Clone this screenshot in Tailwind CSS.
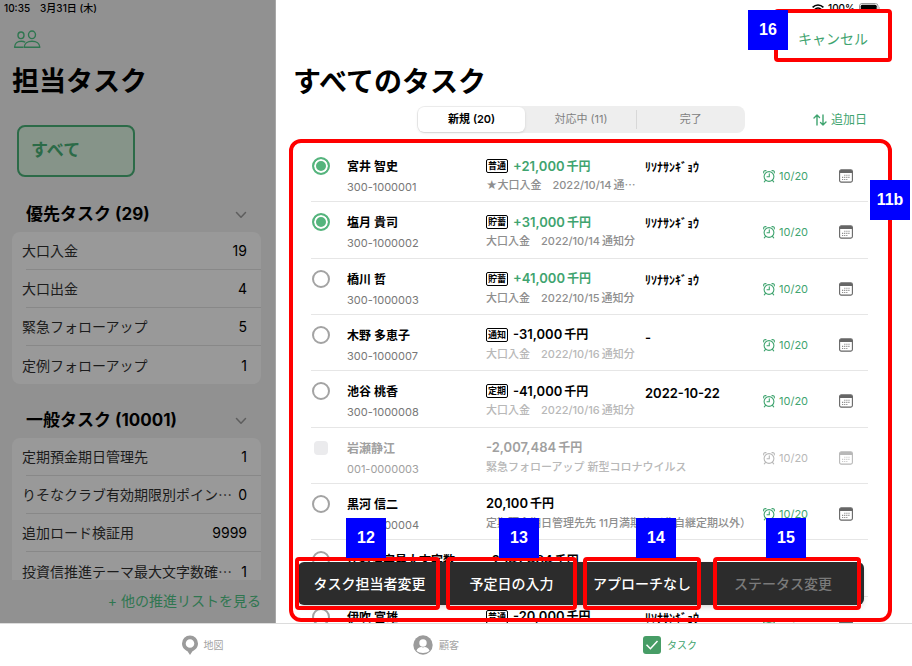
<!DOCTYPE html>
<html lang="ja">
<head>
<meta charset="utf-8">
<meta name="viewport" content="width=device-width, initial-scale=1">
<title>担当タスク</title>
<script src="https://cdn.jsdelivr.net/npm/@tailwindcss/browser@4"></script>
</head>
<body class="flex h-screen flex-col overflow-hidden bg-white font-['Inter','Noto_Sans_CJK_JP',sans-serif] text-black">

<svg class="hidden" aria-hidden="true">
  <symbol id="alarm" viewBox="0 0 14 14" fill="none" stroke="currentColor" stroke-width="1.100" stroke-linecap="round" stroke-linejoin="round">
    <circle cx="7" cy="7.500" r="4.900"/>
    <path d="M7.300 4.800v2.900H5M3.500 11.300l-1.200 1.500M10.500 11.300l1.200 1.500M1.700 3.900Q1.100 1.400 4 1.600M12.300 3.900Q12.900 1.400 10 1.600"/>
  </symbol>
  <symbol id="calendar" viewBox="0 0 14 14">
    <rect x=".6" y=".9" width="12.800" height="12.200" rx="1.600" fill="none" stroke="currentColor" stroke-width="1.100"/>
    <path d="M.6 4V2.400Q.6.9 2.200.9h9.600q1.600 0 1.600 1.500V4z" fill="currentColor"/>
    <path d="M5.200 6.300h6M3 8.400h8.200M3 10.500h6.200" stroke="currentColor" stroke-opacity=".75" stroke-width="1.100" stroke-dasharray="1.200 .9" fill="none"/>
  </symbol>
  <symbol id="chevron" viewBox="0 0 12 8" fill="none" stroke="currentColor" stroke-width="1.500" stroke-linecap="round" stroke-linejoin="round">
    <path d="M1.500 1.500 6 6.300l4.500-4.800"/>
  </symbol>
</svg>

<div class="flex min-h-0 flex-1">
  <aside class="flex w-[276px] shrink-0 flex-col border-r border-[#a8a8a8] bg-[#919191]">
    <div class="flex h-4 items-center gap-[10px] pl-1 text-[10px] font-medium"><span>10:35</span><span>3月31日 (木)</span></div>
    <svg class="mt-3 ml-[13px] h-5 w-7 text-[#2f7650]" viewBox="0 0 28 20" fill="none" stroke="currentColor" stroke-width="1.400" role="img" aria-label="顧客グループ">
      <ellipse cx="8" cy="7.300" rx="3" ry="3.300"/><ellipse cx="19" cy="6.800" rx="3.500" ry="3.800"/>
      <path d="M10.300 19.200H1.600c0-4 3-6 6.600-6 1.600 0 3 .4 4 1.100M11.200 19.200c0-3.900 3.500-6 7.800-6s7.800 2.100 7.800 6z" stroke-linejoin="round"/>
    </svg>
    <h1 class="mt-[14px] ml-3 text-[27px] leading-10 font-bold">担当タスク</h1>
    <button class="mt-[23px] ml-[17px] h-[52px] w-[118px] rounded-lg border-2 border-[#2c6b48] bg-[#869489] pl-3 text-left text-[17px] font-bold text-[#2c6b48]">すべて</button>

    <div class="mt-5 flex flex-col px-3">
      <div class="flex h-[35px] items-center justify-between pr-4 pl-[14px]">
        <h2 class="text-[17px] font-bold">優先タスク (29)</h2>
        <button class="text-[#5e5e5e]" aria-label="優先タスクを折りたたむ"><svg class="h-2 w-3"><use href="#chevron"/></svg></button>
      </div>
      <ul id="priority" class="mr-[2px] rounded-lg bg-[#999999]"></ul>
    </div>
    <div class="mt-[19px] flex min-h-0 flex-1 flex-col overflow-hidden px-3">
      <div class="flex h-[35px] shrink-0 items-center justify-between pr-4 pl-[14px]">
        <h2 class="text-[17px] font-bold">一般タスク (10001)</h2>
        <button class="text-[#5e5e5e]" aria-label="一般タスクを折りたたむ"><svg class="h-2 w-3"><use href="#chevron"/></svg></button>
      </div>
      <ul id="general" class="mr-[2px] rounded-t-lg bg-[#999999]"></ul>
    </div>
    <a href="#" class="flex h-[43px] shrink-0 items-center justify-end pr-[14px] pb-[2px] text-[14px] text-[#2f7650]">+ 他の推進リストを見る</a>
  </aside>

  <main class="flex min-w-0 flex-1 flex-col">
    <div class="relative flex h-[62px] shrink-0 flex-col items-end">
      <div class="flex h-4 items-center gap-1 pr-[31px] text-[10px] font-medium">
        <svg class="h-[9px] w-3" viewBox="0 0 12 9" fill="none" stroke="currentColor" stroke-width="1.500" aria-hidden="true"><path d="M.6 3.400C3.700.3 8.300.3 11.400 3.400M2.700 5.500c1.900-1.900 4.700-1.900 6.600 0"/><path d="M4.300 6.900 6 8.700l1.700-1.800q-1.700-1.300-3.400 0z" fill="currentColor" stroke="none"/></svg>
        <span>100%</span>
        <svg class="h-[10px] w-[22px]" viewBox="0 0 22 10" aria-hidden="true"><rect x=".5" y=".5" width="18.500" height="9" rx="2.500" fill="none" stroke="#999"/><rect x="1.700" y="1.700" width="16" height="6.600" rx="1.500"/><path d="M20.300 3.300q1.400 1.700 0 3.400z" fill="#999"/></svg>
      </div>
      <button class="mt-3 mr-[44px] text-[14px] leading-[22px] text-[#3fa46f]">キャンセル</button>
      <div class="pointer-events-none absolute top-[9px] right-[20px] h-[53px] w-[118px] rounded-sm border-4 border-[#ff0000]"></div>
      <span class="absolute top-[10px] right-[124px] flex size-10 items-center justify-center bg-[#0000ff] font-['Liberation_Sans',sans-serif] text-[16px] font-bold text-white">16</span>
    </div>
    <h1 class="ml-[17px] text-[28px] leading-10 font-bold">すべてのタスク</h1>
    <div class="mt-1 flex h-[27px] shrink-0 items-center pr-[45px] pl-[141px]">
      <div class="grid h-full w-[328px] grid-cols-3 rounded-lg bg-[#eeeeee] text-[11px] text-[#808080]">
        <button class="m-px rounded-md bg-white font-semibold text-black shadow">新規 (20)</button>
        <button>対応中 (11)</button>
        <button class="my-1 border-l border-[#d8d8d8]">完了</button>
      </div>
      <button class="ml-auto flex items-center gap-1 text-[12px] text-[#3fa46f]">
        <svg class="h-3 w-[14px]" viewBox="0 0 14 12" fill="none" stroke="currentColor" stroke-width="1.400" stroke-linecap="round" stroke-linejoin="round" aria-hidden="true"><path d="M4 11V1M1 4l3-3 2.500 2.500M10 1v10M13 8l-3 3-2.500-2.500"/></svg>
        追加日
      </button>
    </div>

    <div class="relative mt-[6px] mr-[20px] ml-[13px] min-h-0 flex-1">
      <div class="h-full overflow-hidden pt-[7px] pr-6 pl-[22px]">
        <table class="h-[507px] w-full table-fixed border-collapse">
          <colgroup><col class="w-9"><col class="w-[139px]"><col class="w-[159px]"><col><col class="w-[77px]"><col class="w-[29px]"></colgroup>
          <tbody id="tasks"></tbody>
        </table>
      </div>

      <div class="absolute right-[28px] bottom-[18px] left-[9px] flex h-[43px] gap-3 rounded-md bg-[#2c2c2c] pr-[6px] text-[14px] font-medium text-white shadow-md">
        <div class="relative flex-[139]"><button class="size-full pl-1 whitespace-nowrap">タスク担当者変更</button>
          <div class="pointer-events-none absolute -inset-x-[3px] -inset-y-[5px] rounded-sm border-4 border-[#ff0000]"></div>
          <span class="absolute -top-11 left-12 flex size-10 items-center justify-center bg-[#0000ff] font-['Liberation_Sans',sans-serif] text-[16px] font-bold">12</span></div>
        <div class="relative flex-[125]"><button class="size-full whitespace-nowrap">予定日の入力</button>
          <div class="pointer-events-none absolute -inset-x-[3px] -inset-y-[5px] rounded-sm border-4 border-[#ff0000]"></div>
          <span class="absolute -top-11 left-[50px] flex size-10 items-center justify-center bg-[#0000ff] font-['Liberation_Sans',sans-serif] text-[16px] font-bold">13</span></div>
        <div class="relative flex-[112]"><button class="size-full whitespace-nowrap">アプローチなし</button>
          <div class="pointer-events-none absolute -inset-x-[3px] -inset-y-[5px] rounded-sm border-4 border-[#ff0000]"></div>
          <span class="absolute -top-11 left-[50px] flex size-10 items-center justify-center bg-[#0000ff] font-['Liberation_Sans',sans-serif] text-[16px] font-bold">14</span></div>
        <div class="relative ml-[6px] flex-[142]"><button class="size-full pr-2 whitespace-nowrap text-[#7a7a7a]" disabled>ステータス変更</button>
          <div class="pointer-events-none absolute -inset-x-[3px] -inset-y-[5px] rounded-sm border-4 border-[#ff0000]"></div>
          <span class="absolute -top-11 left-[50px] flex size-10 items-center justify-center bg-[#0000ff] font-['Liberation_Sans',sans-serif] text-[16px] font-bold">15</span></div>
      </div>

      <div class="pointer-events-none absolute inset-x-0 top-0 bottom-px rounded-xl border-4 border-[#ff0000]"></div>
      <span class="absolute top-[41px] -right-[18px] flex size-10 items-center justify-center bg-[#0000ff] font-['Liberation_Sans',sans-serif] text-[16px] font-bold text-white">11b</span>
    </div>
  </main>
</div>

<nav class="grid h-[43px] shrink-0 grid-cols-3 border-t border-[#dcdcdc] bg-white pr-[125px] pl-[85px] text-[10px] text-[#a3a3a3]">
  <a href="#" class="flex items-center justify-center gap-[5px]">
    <svg class="h-5 w-[18px]" viewBox="0 0 18 20" aria-hidden="true"><path fill="#9b9b9b" fill-rule="evenodd" d="M9 .5a8 8 0 0 1 8 8c0 4-2.900 6.500-5.500 7.700L9 20l-2.500-3.800C3.900 15 1 12.500 1 8.500a8 8 0 0 1 8-8zm0 3.700a4.300 4.300 0 1 0 0 8.600 4.300 4.300 0 0 0 0-8.600z"/></svg>
    地図
  </a>
  <a href="#" class="flex items-center justify-center gap-[6px]">
    <svg class="size-5" viewBox="0 0 20 20" aria-hidden="true"><circle cx="10" cy="10" r="9.700" fill="#9b9b9b"/><circle cx="10" cy="8" r="3.700" fill="#fff"/><path d="M3.500 15.700c.8-2.700 3-3.400 4.700-3.700q1.800.9 3.600 0c1.700.3 3.900 1 4.700 3.700-3.300 3-9.700 3-13 0z" fill="#fff"/></svg>
    顧客
  </a>
  <a href="#" class="flex items-center justify-center gap-[6px] text-[#3fa46f]" aria-current="page">
    <svg class="size-[18px]" viewBox="0 0 18 18" aria-hidden="true"><rect width="18" height="18" rx="3" fill="#479d66"/><path d="m3.500 8.700 3.900 4L14.500 5" fill="none" stroke="#fff" stroke-width="1.500"/></svg>
    タスク
  </a>
</nav>

<script>
  const dots = s => s.replace('⋯', '<span class="font-[\'Noto_Sans_CJK_JP\',sans-serif]">⋯</span>');
  const listRow = ([label, count]) => `
    <li class="group flex h-[38px] flex-col pl-[10px]">
      <a href="#" class="flex flex-1 items-center justify-between pr-[14px] text-[14px] text-[#1c1c1c]">
        <span class="whitespace-nowrap">${dots(label)}</span><span class="text-black">${count}</span>
      </a>
      <div class="ml-1 h-px bg-[#888888] group-last:hidden"></div>
    </li>`;
  document.getElementById('priority').innerHTML =
    [['大口入金', 19], ['大口出金', 4], ['緊急フォローアップ', 5], ['定例フォローアップ', 1]].map(listRow).join('');
  document.getElementById('general').innerHTML =
    [['定期預金期日管理先', 1], ['りそなクラブ有効期限別ポイン⋯', 0], ['追加ロード検証用', 9999], ['投資信推進テーマ最大文字数確⋯', 1]].map(listRow).join('');

  const kana = 'ﾘｿﾅｻﾝｷﾞｮｳ';
  const plus = 'text-[#3fa46f]', minus = 'text-black', off = 'text-[#a0a0a0]';
  const mid = 'text-[#8e8e8e]', light = 'text-[#b8b8b8]';
  const tasks = [
    { name: '宮井 智史', id: '300-1000001', tag: '普通', amount: '+21,000', tone: plus, note: '★大口入金　2022/10/14&thinsp;通⋯', noteTone: mid, org: kana, checked: true },
    { name: '塩月 貴司', id: '300-1000002', tag: '貯蓄', amount: '+31,000', tone: plus, note: '大口入金　2022/10/14&thinsp;通知分', noteTone: mid, org: kana, checked: true },
    { name: '橋川 哲', id: '300-1000003', tag: '貯蓄', amount: '+41,000', tone: plus, note: '大口入金　2022/10/15&thinsp;通知分', noteTone: mid, org: kana },
    { name: '木野 多恵子', id: '300-1000007', tag: '通知', amount: '-31,000', tone: minus, note: '大口入金　2022/10/16&thinsp;通知分', noteTone: light, org: '-' },
    { name: '池谷 桃香', id: '300-1000008', tag: '定期', amount: '-41,000', tone: minus, note: '大口入金　2022/10/16&thinsp;通知分', noteTone: light, org: '2022-10-22' },
    { name: '岩瀬静江', id: '001-0000003', amount: '-2,007,484', tone: off, note: '緊急フォローアップ 新型コロナウイルス', noteTone: light, org: '', disabled: true },
    { name: '黒河 信二', id: '300-1000004', amount: '20,100', tone: minus, note: '定期預金期日管理先先 11月満期分（非自継定期以外）', noteTone: mid, org: '' },
    { name: '氏名漢字最大文字数⋯', id: '300-1000005', amount: '-2,147,484', tone: minus, note: '', noteTone: mid, org: '', undated: true },
    { name: '伊吹 富雄', id: '300-1000006', tag: '普通', amount: '-20,000', tone: minus, note: '大口入金　2022/10/16&thinsp;通知分', noteTone: light, org: kana },
  ];
  document.getElementById('tasks').innerHTML = tasks.map(t => `
    <tr class="border-b border-[#e6e6e6] align-top">
      <td class="pt-[11px] pl-px">
        <input type="checkbox" aria-label="${t.name}" ${t.checked ? 'checked' : ''} ${t.disabled ? 'disabled' : ''}
          class="block size-[18px] appearance-none rounded-full border-2 border-[#a3a3a3] bg-white checked:border-[#55b47d] checked:bg-[#55b47d] checked:shadow-[inset_0_0_0_2px_#ffffff] disabled:rounded-md disabled:border-white disabled:bg-[#ebebed]">
      </td>
      <td class="pt-[11px] whitespace-nowrap">
        <div class="text-[12px] leading-5 font-semibold ${t.disabled ? off : 'text-black'}">${dots(t.name)}</div>
        <div class="text-[11px] leading-5 ${t.disabled ? off : 'text-[#777777]'}">${t.id}</div>
      </td>
      <td class="pt-[10px] whitespace-nowrap">
        <div class="flex h-5 items-center gap-[5px] leading-5">
          ${t.tag ? `<span class="flex h-[14px] items-center rounded-xs border border-black px-px text-[9px] font-bold">${t.tag}</span>` : ''}
          <span class="flex items-baseline gap-[2px] font-semibold ${t.tone}"><span class="text-[13px]">${t.amount}</span><span class="text-[12px]">千円</span></span>
        </div>
        <div class="text-[11px] leading-[18px] font-medium ${t.noteTone}">${dots(t.note)}</div>
      </td>
      <td class="pt-3 leading-5 font-semibold whitespace-nowrap ${t.org === kana ? 'text-[12px]' : 'text-[13px]'}">${t.org}</td>
      <td class="pt-5">${t.undated ? '' : `
        <div class="flex items-center gap-[3px] text-[11px] leading-5 ${t.disabled ? 'text-[#b8b8b8]' : 'text-[#3fa46f]'}"><svg class="size-[14px]"><use href="#alarm"/></svg>10/20</div>`}
      </td>
      <td class="pt-[23px]">${t.undated ? '' : `
        <button class="block ${t.disabled ? 'text-[#b8b8b8]' : 'text-[#666666]'}" aria-label="予定日" ${t.disabled ? 'disabled' : ''}><svg class="size-[14px]"><use href="#calendar"/></svg></button>`}
      </td>
    </tr>`).join('');
</script>
</body>
</html>
